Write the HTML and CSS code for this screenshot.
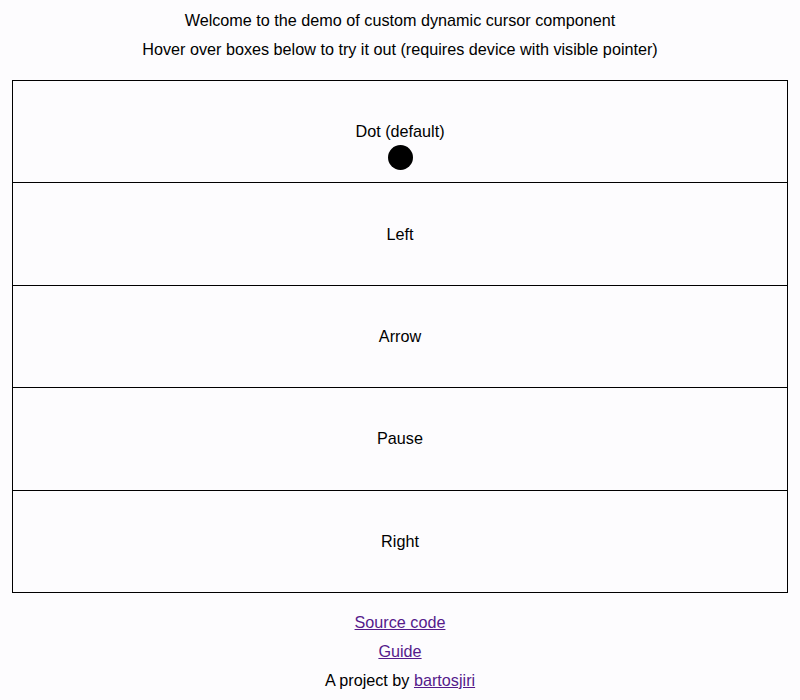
FILE: index.html
```html
<!DOCTYPE html>
<html>
<head>
<meta charset="utf-8">
<link rel="stylesheet" href="styles.css">
</head>
<body>
<main class="page">
  <p class="line">Welcome to the demo of custom dynamic cursor component</p>
  <p class="line">Hover over boxes below to try it out (requires device with visible pointer)</p>
  <div class="boxes">
    <div class="box box-dot">Dot (default)<span class="cursor-dot"></span></div>
    <div class="box">Left</div>
    <div class="box">Arrow</div>
    <div class="box">Pause</div>
    <div class="box">Right</div>
  </div>
  <p class="line"><a href="#">Source code</a></p>
  <p class="line"><a href="#">Guide</a></p>
  <p class="line">A project by <a href="#">bartosjiri</a></p>
</main>
</body>
</html>
```
FILE: styles.css
```css
html, body {
  margin: 0;
  background: #fdfcfe;
}
body {
  font-family: "Liberation Sans", Arial, sans-serif;
  font-size: 16.2px;
  color: #000;
}
.page {
  padding: 10px 12px 0;
  display: flex;
  flex-direction: column;
}
.line {
  margin: 0;
  height: 29px;
  line-height: 20px;
  text-align: center;
}
.boxes {
  margin: 12px 0 19px;
  display: flex;
  flex-direction: column;
}
.box {
  position: relative;
  height: 103.4px;
  box-sizing: border-box;
  border: 1px solid #000;
  margin-top: -1px;
  display: flex;
  align-items: center;
  justify-content: center;
}
.box:first-child {
  margin-top: 0;
}
.cursor-dot {
  position: absolute;
  left: 375px;
  top: 64px;
  width: 25px;
  height: 25px;
  border-radius: 50%;
  background: #000;
}
a {
  color: #551a8b;
}
```
